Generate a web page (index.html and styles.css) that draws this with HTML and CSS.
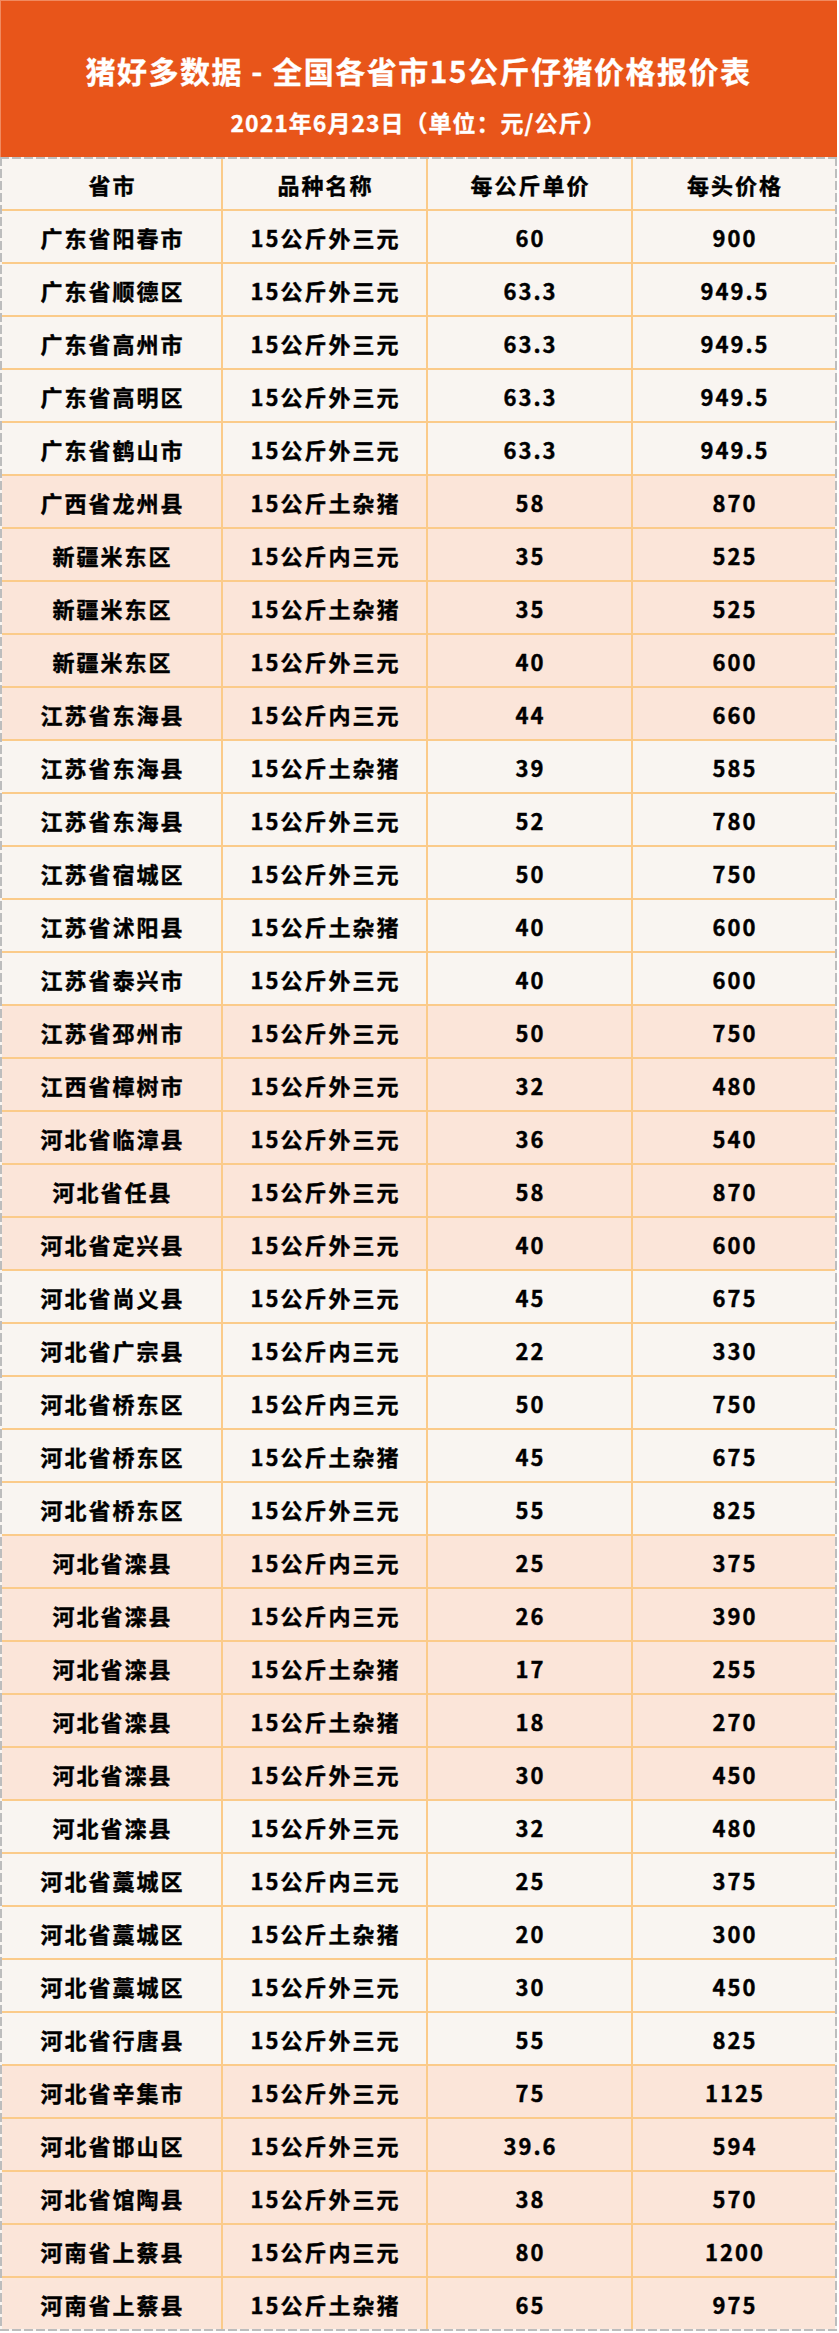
FILE: index.html
```html
<!DOCTYPE html>
<html lang="zh-CN">
<head>
<meta charset="utf-8">
<title>猪好多数据 - 全国各省市15公斤仔猪价格报价表</title>
<link rel="stylesheet" href="styles.css">
</head>
<body>
<div class="page">
  <header class="banner">
    <h1 class="title">猪好多数据&nbsp;-&nbsp;全国各省市15公斤仔猪价格报价表</h1>
    <p class="sub">2021年6月23日（单位：元/公斤）</p>
  </header>
  <div class="sheet">
    <div class="grid">
      <div class="row head"><div class="cell">省市</div><div class="cell">品种名称</div><div class="cell">每公斤单价</div><div class="cell">每头价格</div></div>
      <div class="row"><div class="cell">广东省阳春市</div><div class="cell">15公斤外三元</div><div class="cell">60</div><div class="cell">900</div></div>
      <div class="row"><div class="cell">广东省顺德区</div><div class="cell">15公斤外三元</div><div class="cell">63.3</div><div class="cell">949.5</div></div>
      <div class="row"><div class="cell">广东省高州市</div><div class="cell">15公斤外三元</div><div class="cell">63.3</div><div class="cell">949.5</div></div>
      <div class="row"><div class="cell">广东省高明区</div><div class="cell">15公斤外三元</div><div class="cell">63.3</div><div class="cell">949.5</div></div>
      <div class="row"><div class="cell">广东省鹤山市</div><div class="cell">15公斤外三元</div><div class="cell">63.3</div><div class="cell">949.5</div></div>
      <div class="row alt"><div class="cell">广西省龙州县</div><div class="cell">15公斤土杂猪</div><div class="cell">58</div><div class="cell">870</div></div>
      <div class="row alt"><div class="cell">新疆米东区</div><div class="cell">15公斤内三元</div><div class="cell">35</div><div class="cell">525</div></div>
      <div class="row alt"><div class="cell">新疆米东区</div><div class="cell">15公斤土杂猪</div><div class="cell">35</div><div class="cell">525</div></div>
      <div class="row alt"><div class="cell">新疆米东区</div><div class="cell">15公斤外三元</div><div class="cell">40</div><div class="cell">600</div></div>
      <div class="row alt"><div class="cell">江苏省东海县</div><div class="cell">15公斤内三元</div><div class="cell">44</div><div class="cell">660</div></div>
      <div class="row"><div class="cell">江苏省东海县</div><div class="cell">15公斤土杂猪</div><div class="cell">39</div><div class="cell">585</div></div>
      <div class="row"><div class="cell">江苏省东海县</div><div class="cell">15公斤外三元</div><div class="cell">52</div><div class="cell">780</div></div>
      <div class="row"><div class="cell">江苏省宿城区</div><div class="cell">15公斤外三元</div><div class="cell">50</div><div class="cell">750</div></div>
      <div class="row"><div class="cell">江苏省沭阳县</div><div class="cell">15公斤土杂猪</div><div class="cell">40</div><div class="cell">600</div></div>
      <div class="row"><div class="cell">江苏省泰兴市</div><div class="cell">15公斤外三元</div><div class="cell">40</div><div class="cell">600</div></div>
      <div class="row alt"><div class="cell">江苏省邳州市</div><div class="cell">15公斤外三元</div><div class="cell">50</div><div class="cell">750</div></div>
      <div class="row alt"><div class="cell">江西省樟树市</div><div class="cell">15公斤外三元</div><div class="cell">32</div><div class="cell">480</div></div>
      <div class="row alt"><div class="cell">河北省临漳县</div><div class="cell">15公斤外三元</div><div class="cell">36</div><div class="cell">540</div></div>
      <div class="row alt"><div class="cell">河北省任县</div><div class="cell">15公斤外三元</div><div class="cell">58</div><div class="cell">870</div></div>
      <div class="row alt"><div class="cell">河北省定兴县</div><div class="cell">15公斤外三元</div><div class="cell">40</div><div class="cell">600</div></div>
      <div class="row"><div class="cell">河北省尚义县</div><div class="cell">15公斤外三元</div><div class="cell">45</div><div class="cell">675</div></div>
      <div class="row"><div class="cell">河北省广宗县</div><div class="cell">15公斤内三元</div><div class="cell">22</div><div class="cell">330</div></div>
      <div class="row"><div class="cell">河北省桥东区</div><div class="cell">15公斤内三元</div><div class="cell">50</div><div class="cell">750</div></div>
      <div class="row"><div class="cell">河北省桥东区</div><div class="cell">15公斤土杂猪</div><div class="cell">45</div><div class="cell">675</div></div>
      <div class="row"><div class="cell">河北省桥东区</div><div class="cell">15公斤外三元</div><div class="cell">55</div><div class="cell">825</div></div>
      <div class="row alt"><div class="cell">河北省滦县</div><div class="cell">15公斤内三元</div><div class="cell">25</div><div class="cell">375</div></div>
      <div class="row alt"><div class="cell">河北省滦县</div><div class="cell">15公斤内三元</div><div class="cell">26</div><div class="cell">390</div></div>
      <div class="row alt"><div class="cell">河北省滦县</div><div class="cell">15公斤土杂猪</div><div class="cell">17</div><div class="cell">255</div></div>
      <div class="row alt"><div class="cell">河北省滦县</div><div class="cell">15公斤土杂猪</div><div class="cell">18</div><div class="cell">270</div></div>
      <div class="row alt"><div class="cell">河北省滦县</div><div class="cell">15公斤外三元</div><div class="cell">30</div><div class="cell">450</div></div>
      <div class="row"><div class="cell">河北省滦县</div><div class="cell">15公斤外三元</div><div class="cell">32</div><div class="cell">480</div></div>
      <div class="row"><div class="cell">河北省藁城区</div><div class="cell">15公斤内三元</div><div class="cell">25</div><div class="cell">375</div></div>
      <div class="row"><div class="cell">河北省藁城区</div><div class="cell">15公斤土杂猪</div><div class="cell">20</div><div class="cell">300</div></div>
      <div class="row"><div class="cell">河北省藁城区</div><div class="cell">15公斤外三元</div><div class="cell">30</div><div class="cell">450</div></div>
      <div class="row"><div class="cell">河北省行唐县</div><div class="cell">15公斤外三元</div><div class="cell">55</div><div class="cell">825</div></div>
      <div class="row alt"><div class="cell">河北省辛集市</div><div class="cell">15公斤外三元</div><div class="cell">75</div><div class="cell">1125</div></div>
      <div class="row alt"><div class="cell">河北省邯山区</div><div class="cell">15公斤外三元</div><div class="cell">39.6</div><div class="cell">594</div></div>
      <div class="row alt"><div class="cell">河北省馆陶县</div><div class="cell">15公斤外三元</div><div class="cell">38</div><div class="cell">570</div></div>
      <div class="row alt"><div class="cell">河南省上蔡县</div><div class="cell">15公斤内三元</div><div class="cell">80</div><div class="cell">1200</div></div>
      <div class="row alt"><div class="cell">河南省上蔡县</div><div class="cell">15公斤土杂猪</div><div class="cell">65</div><div class="cell">975</div></div>
    </div>
  </div>
</div>
</body>
</html>
```

FILE: styles.css
```css
html, body {
  margin: 0;
  padding: 0;
  background: #ffffff;
}

body {
  font-family: "Noto Sans CJK SC", "Noto Sans", sans-serif;
  color: #000000;
}

.page {
  width: 837px;
}

.banner {
  height: 157px;
  box-sizing: border-box;
  padding-top: 50px;
  background: #e8551a;
  color: #ffffff;
  text-align: center;
  box-shadow: inset 1px 1px 0 #f08a60;
}

.title {
  margin: 0;
  font-size: 30px;
  line-height: 40px;
  font-weight: 700;
  letter-spacing: 1.5px;
  -webkit-text-stroke: 0.3px currentColor;
}

.sub {
  margin: 17px 0 0;
  font-size: 23px;
  line-height: 30px;
  font-weight: 700;
  letter-spacing: 1px;
  -webkit-text-stroke: 0.3px currentColor;
}

.sheet {
  padding: 2px;
  background:
    repeating-linear-gradient(90deg, #bdbdbd 0 9px, transparent 9px 12px) top left / 100% 2px no-repeat,
    repeating-linear-gradient(90deg, #bdbdbd 0 9px, transparent 9px 12px) bottom left / 100% 2px no-repeat,
    repeating-linear-gradient(180deg, #bdbdbd 0 9px, transparent 9px 12px) top left / 2px 100% no-repeat,
    repeating-linear-gradient(180deg, #bdbdbd 0 9px, transparent 9px 12px) top right / 2px 100% no-repeat,
    #f9f5f1;
}

.grid {
  display: flex;
  flex-direction: column;
  gap: 2px;
  background: #fbcb8a;
}

.row {
  display: grid;
  grid-template-columns: 219px 203px 203px 202px;
  column-gap: 2px;
  height: 51px;
}

.row.head {
  height: 50px;
}

.cell {
  display: flex;
  align-items: center;
  justify-content: center;
  padding-left: 2px;
  background: #f9f5f1;
  font-size: 22px;
  font-weight: 700;
  letter-spacing: 2px;
  white-space: nowrap;
  -webkit-text-stroke: 0.4px currentColor;
}

.row.alt .cell {
  background: #fbe5d9;
}
```
